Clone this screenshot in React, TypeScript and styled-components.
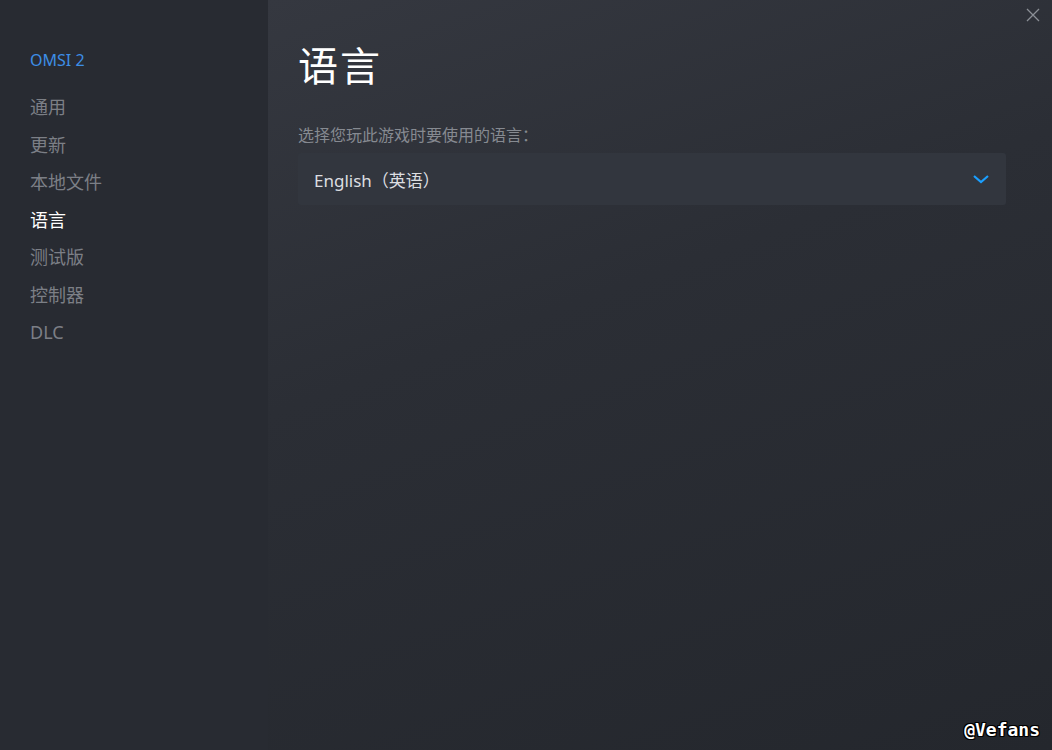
import React from "react";
import styled, { createGlobalStyle } from "styled-components";

const GlobalStyle = createGlobalStyle`
  html, body {
    margin: 0;
    padding: 0;
    background: #272a31;
  }
  #root {
    width: 1052px;
    height: 750px;
  }
`;

const Root = styled.div`
  display: flex;
  width: 1052px;
  height: 750px;
  overflow: hidden;
  font-family: "Noto Sans", "Noto Sans CJK SC", sans-serif;
  position: relative;
`;

const Sidebar = styled.nav`
  width: 268px;
  flex-shrink: 0;
  background: #282b32;
  padding: 46px 0 0 30px;
  box-sizing: border-box;
  display: flex;
  flex-direction: column;
`;

const GameTitle = styled.div`
  color: #3d8ee6;
  font-size: 16px;
  line-height: 28px;
  margin-bottom: 15px;
`;

const NavItem = styled.div<{ $active?: boolean }>`
  color: ${(p) => (p.$active ? "#ffffff" : "#7c7f86")};
  font-size: 18px;
  line-height: 37.5px;
  cursor: pointer;
`;

const Main = styled.main`
  flex: 1;
  background: linear-gradient(160deg, #353840 0%, #2b2e35 40%, #24272d 100%);
  padding: 38px 46px 0 30px;
  box-sizing: border-box;
  display: flex;
  flex-direction: column;
`;

const Title = styled.h1`
  margin: 0;
  color: #ffffff;
  font-size: 40px;
  font-weight: 400;
  line-height: 56px;
  letter-spacing: 2px;
`;

const Label = styled.div`
  margin-top: 29px;
  color: #868a91;
  font-size: 16px;
  line-height: 24px;
`;

const Select = styled.div`
  margin-top: 6px;
  height: 52px;
  background: #32363e;
  border-radius: 3px;
  display: flex;
  align-items: center;
  justify-content: space-between;
  padding: 0 16px 0 16px;
  cursor: pointer;
`;

const SelectText = styled.span`
  color: #dcdee1;
  font-size: 17px;
`;

const CloseButton = styled.button`
  position: absolute;
  top: 8px;
  right: 10px;
  width: 16px;
  height: 16px;
  padding: 0;
  background: none;
  border: none;
  cursor: pointer;
  display: flex;
`;

const Watermark = styled.div`
  position: absolute;
  right: 12px;
  bottom: 10px;
  color: #ffffff;
  font-family: "DejaVu Sans Mono", monospace;
  font-size: 18px;
  font-weight: 700;
  text-shadow: 1px 0 0 #000, -1px 0 0 #000, 0 1px 0 #000, 0 -1px 0 #000,
    1px 1px 0 #000, -1px -1px 0 #000, 1px -1px 0 #000, -1px 1px 0 #000;
`;

const navItems = ["通用", "更新", "本地文件", "语言", "测试版", "控制器", "DLC"];

export default function App() {
  return (
    <Root>
      <GlobalStyle />
      <Sidebar>
        <GameTitle>OMSI 2</GameTitle>
        {navItems.map((item) => (
          <NavItem key={item} $active={item === "语言"}>
            {item}
          </NavItem>
        ))}
      </Sidebar>
      <Main>
        <Title>语言</Title>
        <Label>选择您玩此游戏时要使用的语言：</Label>
        <Select>
          <SelectText>English（英语）</SelectText>
          <svg width="18" height="10" viewBox="0 0 18 10">
            <path d="M2 2 L9 8 L16 2" fill="none" stroke="#1a9fff" strokeWidth="2.2" />
          </svg>
        </Select>
      </Main>
      <CloseButton aria-label="close">
        <svg width="14" height="14" viewBox="0 0 14 14">
          <path d="M1 1 L13 13 M13 1 L1 13" stroke="#8b8f96" strokeWidth="1.3" />
        </svg>
      </CloseButton>
      <Watermark>@Vefans</Watermark>
    </Root>
  );
}
